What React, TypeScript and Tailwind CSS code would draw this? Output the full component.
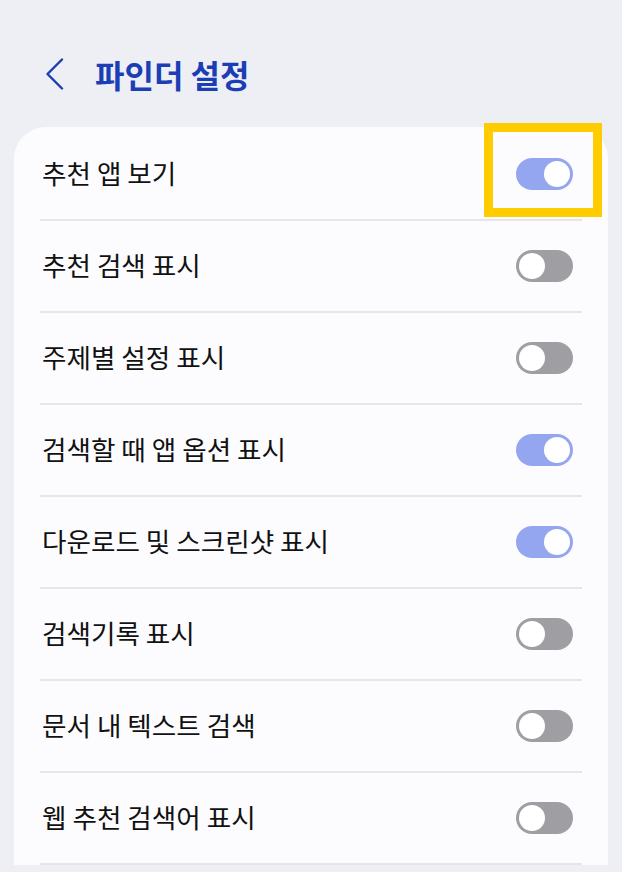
import React from "react";

const items: { label: string; on: boolean }[] = [
  { label: "추천 앱 보기", on: true },
  { label: "추천 검색 표시", on: false },
  { label: "주제별 설정 표시", on: false },
  { label: "검색할 때 앱 옵션 표시", on: true },
  { label: "다운로드 및 스크린샷 표시", on: true },
  { label: "검색기록 표시", on: false },
  { label: "문서 내 텍스트 검색", on: false },
  { label: "웹 추천 검색어 표시", on: false },
];

function Toggle({ on }: { on: boolean }) {
  return (
    <div
      className={
        on
          ? "flex h-[32px] w-[57px] items-center justify-end rounded-full bg-[#95a6f1] p-[3px]"
          : "flex h-[32px] w-[57px] items-center justify-start rounded-full bg-[#9e9ea3] p-[3px]"
      }
    >
      <div className="h-[26px] w-[26px] rounded-full bg-white" />
    </div>
  );
}

export default function App() {
  return (
    <div className="relative h-[872px] w-full overflow-hidden bg-[#eeeff5] font-['Noto_Sans_CJK_KR','Noto_Sans',sans-serif]">
      <div className="h-[127px] pt-[55px]">
        <div className="flex h-[38px] items-center">
          <svg
            className="ml-[45px]"
            width="19"
            height="32"
            viewBox="0 0 19 32"
            fill="none"
          >
            <polyline
              points="17,1.5 2.5,16 17,30.5"
              stroke="#1c3eb5"
              strokeWidth="2.4"
              strokeLinecap="round"
              strokeLinejoin="round"
            />
          </svg>
          <span className="ml-[31px] text-[32px] font-bold leading-none text-[#1c3eb5]">
            파인더 설정
          </span>
        </div>
      </div>
      <div className="mx-[14px] rounded-t-[32px] bg-[#fcfcfe] pt-[2px]">
        {items.map((it) => (
          <div key={it.label}>
            <div className="flex h-[90px] items-center justify-between pl-[28px] pr-[35px]">
              <span className="-mt-[2px] text-[26.6px] leading-none text-[#111111]">
                {it.label}
              </span>
              <Toggle on={it.on} />
            </div>
            <div className="mx-[26px] h-[2px] bg-[#e5e5ea]" />
          </div>
        ))}
      </div>
      <div className="absolute left-[484px] top-[123px] h-[94px] w-[118px] border-[9px] border-[#ffcc00]" />
    </div>
  );
}
